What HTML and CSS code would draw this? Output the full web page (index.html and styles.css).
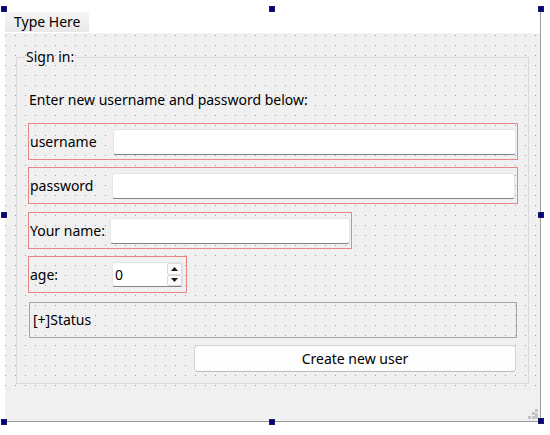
FILE: index.html
```html
<!DOCTYPE html>
<html>
<head>
<meta charset="utf-8">
<link rel="stylesheet" href="styles.css">
</head>
<body>
<div class="canvas">
  <div class="form">
    <div class="menubar"><div class="menu-item">Type Here</div></div>
    <div class="central">
      <fieldset class="group">
        <legend>Sign in:</legend>
        <div class="intro">Enter new username and password below:</div>
        <div class="layout row-user"><span class="label">username</span><span class="lineedit"></span></div>
        <div class="layout row-pass"><span class="label">password</span><span class="lineedit"></span></div>
        <div class="layout row-name"><span class="label">Your name:</span><span class="lineedit"></span></div>
        <div class="layout row-age"><span class="label">age:</span>
          <span class="spinbox"><span class="spin-value">0</span>
            <span class="spin-buttons">
              <span class="spin-btn"><svg width="7" height="4" viewBox="0 0 7 4"><path d="M0 4 L3.5 0 L7 4 Z" fill="#1a1a1a"/></svg></span>
              <span class="spin-btn"><svg width="7" height="4" viewBox="0 0 7 4"><path d="M0 0 L3.5 4 L7 0 Z" fill="#1a1a1a"/></svg></span>
            </span>
          </span>
        </div>
        <div class="status">[+]Status</div>
        <div class="button-row"><button class="button">Create new user</button></div>
      </fieldset>
    </div>
    <div class="statusbar">
      <svg class="grip" width="11" height="11" viewBox="0 0 11 11" shape-rendering="crispEdges">
        <rect x="7" y="0" width="3" height="3" fill="#c4c4c4"/>
        <rect x="4" y="3" width="3" height="3" fill="#c4c4c4"/>
        <rect x="7" y="4" width="3" height="3" fill="#c4c4c4"/>
        <rect x="0" y="7" width="3" height="3" fill="#c4c4c4"/>
        <rect x="4" y="7" width="3" height="3" fill="#c4c4c4"/>
        <rect x="7" y="7" width="3" height="3" fill="#c4c4c4"/>
      </svg>
    </div>
  </div>
  <span class="handle h-tl"></span>
  <span class="handle h-tm"></span>
  <span class="handle h-tr"></span>
  <span class="handle h-ml"></span>
  <span class="handle h-mr"></span>
  <span class="handle h-bl"></span>
  <span class="handle h-bm"></span>
  <span class="handle h-br"></span>
</div>
</body>
</html>
```
FILE: styles.css
```css
* { box-sizing: border-box; }
html, body {
  margin: 0;
  padding: 0;
  background: #ffffff;
  font-family: "Segoe UI", "Noto Sans", "Open Sans", sans-serif;
  font-size: 14px;
  color: #000;
}
.canvas {
  position: relative;
  width: 550px;
  height: 435px;
  padding-top: 9px;
}
.form {
  margin-left: 5px;
  width: 536px;
  height: 413px;
  border-right: 1px solid #9c9c9c;
  border-bottom: 1px solid #9c9c9c;
  display: flex;
  flex-direction: column;
}
.menubar {
  height: 24px;
  background: #fff;
  padding-top: 3px;
  display: flex;
}
.menu-item {
  width: 84px;
  height: 20px;
  padding-left: 9px;
  line-height: 20px;
  background: linear-gradient(#f6f6f6, #e7e7e7);
}
.central {
  position: relative;
  height: 359px;
  background: #f0f0f0;
  padding: 15px 11px 0 11px;
}
.central::before {
  content: "";
  position: absolute;
  inset: 0;
  background-image: linear-gradient(to right, #9d9d9d 1px, transparent 1px);
  background-size: 10px 10px;
  background-position: 0 2px;
  -webkit-mask-image: linear-gradient(to bottom, #000 1px, transparent 1px);
  -webkit-mask-size: 10px 10px;
  -webkit-mask-position: 0 2px;
  mask-image: linear-gradient(to bottom, #000 1px, transparent 1px);
  mask-size: 10px 10px;
  mask-position: 0 2px;
}
.group {
  position: relative;
  margin: 0;
  min-width: 0;
  border: 1px solid #d9d9d9;
  padding: 0 10px 11px 11px;
  display: flex;
  flex-direction: column;
}
.group legend {
  padding: 0 1px;
  margin-left: -3px;
  line-height: 18px;
}
.intro {
  margin-top: 24px;
  margin-bottom: 13px;
  line-height: 20px;
  padding-left: 1px;
}
.layout {
  height: 37px;
  border: 1px solid #e88585;
  display: flex;
  align-items: flex-start;
  padding-top: 5px;
}
.row-user { width: 490px; }
.row-pass { width: 490px; margin-top: 7px; }
.row-name { width: 324px; margin-top: 8px; }
.row-age { width: 159px; margin-top: 7px; }
.label {
  flex: none;
  line-height: 26px;
  padding-left: 1px;
}
.row-user .label { width: 84px; }
.row-pass .label { width: 83px; }
.row-name .label { width: 81px; }
.row-age .label { width: 83px; }
.lineedit {
  display: block;
  height: 26px;
  width: 403px;
  background: #fff;
  border: 1px solid #e6e6e6;
  border-bottom: 1px solid #838383;
  border-radius: 3px;
}
.row-name .lineedit { width: 240px; }
.spinbox {
  display: flex;
  height: 25px;
  width: 71px;
  background: #fff;
  border: 1px solid #e6e6e6;
  border-bottom: 1px solid #838383;
  border-radius: 3px;
}
.spin-value {
  flex: 1;
  line-height: 23px;
  padding-left: 2px;
}
.spin-buttons {
  display: flex;
  flex-direction: column;
  width: 15px;
}
.spin-btn {
  flex: 1;
  display: flex;
  align-items: center;
  justify-content: center;
  border: 1px solid #dadada;
  border-radius: 2px;
  background: #fbfbfb;
}
.status {
  position: relative;
  margin-top: 9px;
  margin-left: 1px;
  width: 488px;
  height: 36px;
  border: 1px solid #a4a4a4;
  padding-left: 3px;
  line-height: 34px;
}
.button-row {
  position: relative;
  margin-top: 7px;
  display: flex;
  justify-content: flex-end;
  padding-right: 2px;
}
.button {
  width: 322px;
  height: 27px;
  font: inherit;
  color: #000;
  background: #fdfdfd;
  border: 1px solid #d4d4d4;
  border-bottom-color: #bcbcbc;
  border-radius: 4px;
  padding: 0;
}
.statusbar {
  flex: 1;
  background: #f0f0f0;
  display: flex;
  justify-content: flex-end;
  align-items: flex-end;
  padding: 0 1px 1px 0;
}
.grip { display: block; }
.handle {
  position: absolute;
  width: 6px;
  height: 6px;
  background: #000080;
  border: 1px solid #1c1c5e;
}
.h-tl { left: 1px; top: 6px; }
.h-tm { left: 269px; top: 6px; }
.h-tr { left: 538px; top: 6px; }
.h-ml { left: 1px; top: 212px; }
.h-mr { left: 538px; top: 212px; }
.h-bl { left: 1px; top: 419px; }
.h-bm { left: 269px; top: 419px; }
.h-br { left: 538px; top: 418px; }
```
